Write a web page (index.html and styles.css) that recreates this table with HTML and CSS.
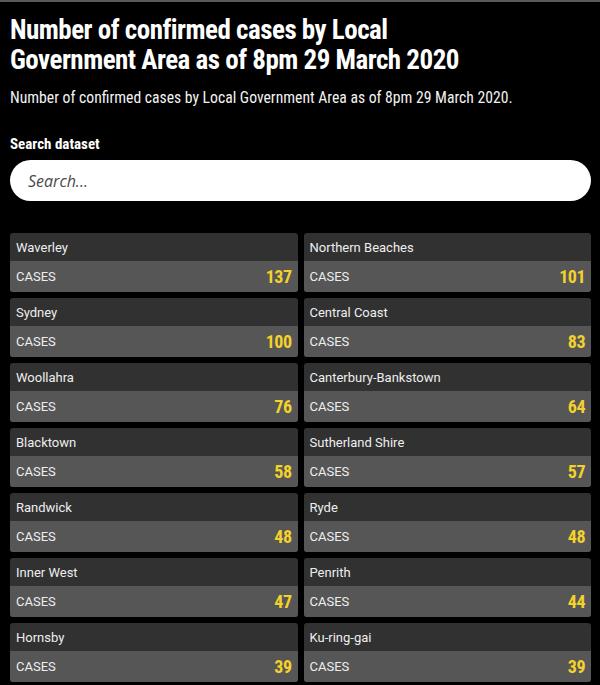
FILE: index.html
```html
<!DOCTYPE html>
<html lang="en">
<head>
<meta charset="utf-8">
<title>Confirmed cases by LGA</title>
<link rel="stylesheet" href="styles.css">
</head>
<body>
<main class="page">
  <h1 class="title">Number of confirmed cases by Local Government Area as of 8pm 29 March 2020</h1>
  <p class="subtitle">Number of confirmed cases by Local Government Area as of 8pm 29 March 2020.</p>
  <label class="search-label" for="search">Search dataset</label>
  <input class="search" id="search" type="text" placeholder="Search...">
  <section class="grid">
    <div class="card"><div class="name">Waverley</div><div class="row"><span class="lbl">CASES</span><span class="num">137</span></div></div>
    <div class="card"><div class="name">Northern Beaches</div><div class="row"><span class="lbl">CASES</span><span class="num">101</span></div></div>
    <div class="card"><div class="name">Sydney</div><div class="row"><span class="lbl">CASES</span><span class="num">100</span></div></div>
    <div class="card"><div class="name">Central Coast</div><div class="row"><span class="lbl">CASES</span><span class="num">83</span></div></div>
    <div class="card"><div class="name">Woollahra</div><div class="row"><span class="lbl">CASES</span><span class="num">76</span></div></div>
    <div class="card"><div class="name">Canterbury-Bankstown</div><div class="row"><span class="lbl">CASES</span><span class="num">64</span></div></div>
    <div class="card"><div class="name">Blacktown</div><div class="row"><span class="lbl">CASES</span><span class="num">58</span></div></div>
    <div class="card"><div class="name">Sutherland Shire</div><div class="row"><span class="lbl">CASES</span><span class="num">57</span></div></div>
    <div class="card"><div class="name">Randwick</div><div class="row"><span class="lbl">CASES</span><span class="num">48</span></div></div>
    <div class="card"><div class="name">Ryde</div><div class="row"><span class="lbl">CASES</span><span class="num">48</span></div></div>
    <div class="card"><div class="name">Inner West</div><div class="row"><span class="lbl">CASES</span><span class="num">47</span></div></div>
    <div class="card"><div class="name">Penrith</div><div class="row"><span class="lbl">CASES</span><span class="num">44</span></div></div>
    <div class="card"><div class="name">Hornsby</div><div class="row"><span class="lbl">CASES</span><span class="num">39</span></div></div>
    <div class="card"><div class="name">Ku-ring-gai</div><div class="row"><span class="lbl">CASES</span><span class="num">39</span></div></div>
  </section>
</main>
</body>
</html>
```
FILE: styles.css
```css
html, body {
  margin: 0;
  padding: 0;
  background: #000;
}
body {
  border-top: 2px solid #5a5a5a;
  font-family: Roboto, "Liberation Sans", sans-serif;
  color: #fff;
  overflow: hidden;
}
.page {
  padding: 13px 9px 0 10px;
  display: flex;
  flex-direction: column;
}
.title {
  margin: 0;
  font-family: "Roboto Condensed", "Liberation Sans Narrow", "DejaVu Sans Condensed", Roboto, sans-serif;
  font-stretch: condensed;
  font-weight: 700;
  font-size: 27px;
  line-height: 30px;
  letter-spacing: -0.5px;
  max-width: 470px;
}
.subtitle {
  margin: 14px 0 0;
  font-family: "Roboto Condensed", "Liberation Sans Narrow", "DejaVu Sans Condensed", Roboto, sans-serif;
  font-stretch: condensed;
  font-size: 15.7px;
  line-height: 18px;
  color: #f2f2f2;
}
.search-label {
  margin-top: 28px;
  font-family: "Roboto Condensed", "Liberation Sans Narrow", "DejaVu Sans Condensed", Roboto, sans-serif;
  font-stretch: condensed;
  font-weight: 700;
  font-size: 15px;
  line-height: 18px;
}
.search {
  margin-top: 7px;
  height: 41px;
  box-sizing: border-box;
  border: none;
  border-radius: 21px;
  background: #fff;
  padding: 0 18px;
  font-family: "Open Sans", sans-serif;
  font-style: italic;
  font-size: 16px;
  outline: none;
}
.search::placeholder {
  color: #4a4a4a;
}
.grid {
  margin-top: 32px;
  display: grid;
  grid-template-columns: 1fr 1fr;
  column-gap: 6px;
  row-gap: 6px;
}
.card {
  border-radius: 3px;
  overflow: hidden;
  background: #313131;
}
.name {
  height: 28px;
  line-height: 30px;
  padding: 0 6px;
  font-size: 13px;
  color: #eee;
}
.row {
  height: 31px;
  background: #565656;
  display: flex;
  align-items: center;
  justify-content: space-between;
  padding: 0 6px;
}
.lbl {
  font-size: 13px;
  color: #eee;
}
.num {
  font-family: "Roboto Condensed", "Liberation Sans Narrow", "DejaVu Sans Condensed", Roboto, sans-serif;
  font-stretch: condensed;
  font-weight: 700;
  font-size: 18px;
  color: #f3d22b;
  letter-spacing: -0.5px;
}
```
